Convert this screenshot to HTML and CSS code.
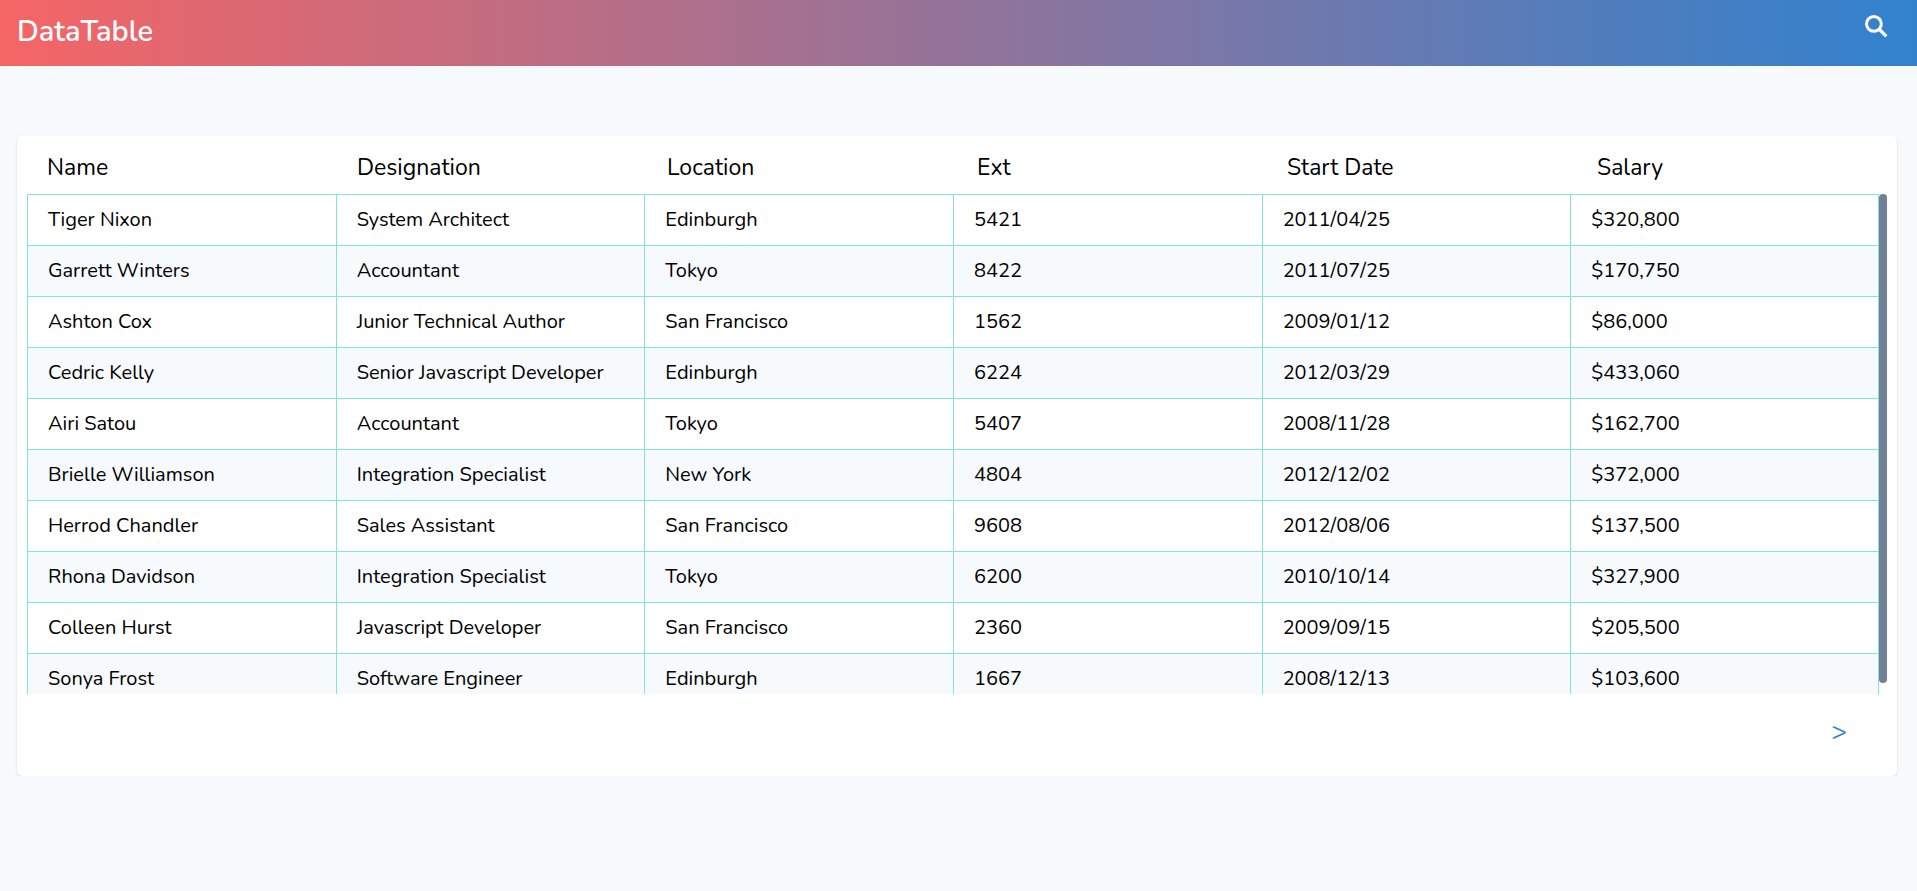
FILE: index.html
```html
<!DOCTYPE html>
<html lang="en">
<head>
<meta charset="utf-8">
<meta name="viewport" content="width=device-width, initial-scale=1">
<title>DataTable</title>
<link rel="stylesheet" href="styles.css">
</head>
<body>
<header class="topbar">
  <h1 class="title">DataTable</h1>
  <button class="search" type="button" aria-label="Search">
    <svg viewBox="0 0 30 30" width="30" height="30" fill="none" stroke="currentColor" aria-hidden="true"><circle cx="12.9" cy="11.9" r="7.4" stroke-width="3"/><path d="M18 17l7.4 7.4" stroke-width="3.2"/></svg>
  </button>
</header>
<main class="card">
  <table class="table">
    <thead>
      <tr><th scope="col">Name</th><th scope="col">Designation</th><th scope="col">Location</th><th scope="col">Ext</th><th scope="col">Start Date</th><th scope="col">Salary</th></tr>
    </thead>
    <tbody>
      <tr><td>Tiger Nixon</td><td>System Architect</td><td>Edinburgh</td><td>5421</td><td>2011/04/25</td><td>$320,800</td></tr>
      <tr><td>Garrett Winters</td><td>Accountant</td><td>Tokyo</td><td>8422</td><td>2011/07/25</td><td>$170,750</td></tr>
      <tr><td>Ashton Cox</td><td>Junior Technical Author</td><td>San Francisco</td><td>1562</td><td>2009/01/12</td><td>$86,000</td></tr>
      <tr><td>Cedric Kelly</td><td>Senior Javascript Developer</td><td>Edinburgh</td><td>6224</td><td>2012/03/29</td><td>$433,060</td></tr>
      <tr><td>Airi Satou</td><td>Accountant</td><td>Tokyo</td><td>5407</td><td>2008/11/28</td><td>$162,700</td></tr>
      <tr><td>Brielle Williamson</td><td>Integration Specialist</td><td>New York</td><td>4804</td><td>2012/12/02</td><td>$372,000</td></tr>
      <tr><td>Herrod Chandler</td><td>Sales Assistant</td><td>San Francisco</td><td>9608</td><td>2012/08/06</td><td>$137,500</td></tr>
      <tr><td>Rhona Davidson</td><td>Integration Specialist</td><td>Tokyo</td><td>6200</td><td>2010/10/14</td><td>$327,900</td></tr>
      <tr><td>Colleen Hurst</td><td>Javascript Developer</td><td>San Francisco</td><td>2360</td><td>2009/09/15</td><td>$205,500</td></tr>
      <tr><td>Sonya Frost</td><td>Software Engineer</td><td>Edinburgh</td><td>1667</td><td>2008/12/13</td><td>$103,600</td></tr>
    </tbody>
  </table>
  <nav class="pager" aria-label="Pages">
    <button class="next" type="button" aria-label="Next page">&gt;</button>
  </nav>
</main>
</body>
</html>
```
FILE: styles.css
```css
* { box-sizing: border-box; }

body {
  margin: 0;
  background: #f7fafc;
  color: #000;
  font-family: Nunito, Lato, "Open Sans", sans-serif;
  font-size: 20px;
  line-height: 30px;
}

button {
  padding: 0;
  border: 0;
  background: none;
  font: inherit;
  cursor: pointer;
}

.topbar {
  display: flex;
  justify-content: space-between;
  align-items: flex-start;
  height: 66px;
  padding: 12px 26px 0 17px;
  background: linear-gradient(to right, #f56565, #3182ce);
  color: #fff;
}

.title {
  margin: 0;
  font-size: 29px;
  font-weight: 600;
  line-height: 40px;
}

.search {
  display: flex;
  color: #fff;
}

.card {
  margin: 70px 20px 0 17px;
  padding: 10px;
  border-radius: 5px;
  background: #fff;
  box-shadow: 0 1px 3px rgba(0, 0, 0, .1), 0 1px 2px rgba(0, 0, 0, .06);
}

.table {
  display: block;
  position: relative;
}

/* scroll thumb, laid over the gutter at the right of the rows */
.table::after {
  content: "";
  position: absolute;
  top: 48px;
  right: 0;
  bottom: 11px;
  width: 8px;
  border-radius: 5px;
  background: #718096;
}

.table thead {
  display: block;
}

.table tr {
  display: table;
  width: 100%;
  table-layout: fixed;
  border-spacing: 0;
}

.table th {
  height: 48px;
  padding: 0 20px 4px;
  font-size: 23px;
  font-weight: 400;
  text-align: left;
}

.table tbody {
  display: block;
  height: 500px;
  padding-right: 8px;
  overflow-y: auto;
  scrollbar-width: none;
}

.table td {
  height: 51px;
  padding: 0 20px;
  border-top: 1px solid #81e6d9;
  border-left: 1px solid #81e6d9;
}

.table td:last-child {
  border-right: 1px solid #81e6d9;
}

.table tr:last-child td {
  height: 52px;
  border-bottom: 1px solid #81e6d9;
}

.table tbody tr:nth-child(even) {
  background: #f7fafc;
}

.pager {
  display: flex;
  justify-content: flex-end;
  padding: 18px 40px 14px;
}

.next {
  color: #3182ce;
  font-size: 26px;
  line-height: 40px;
}
```
